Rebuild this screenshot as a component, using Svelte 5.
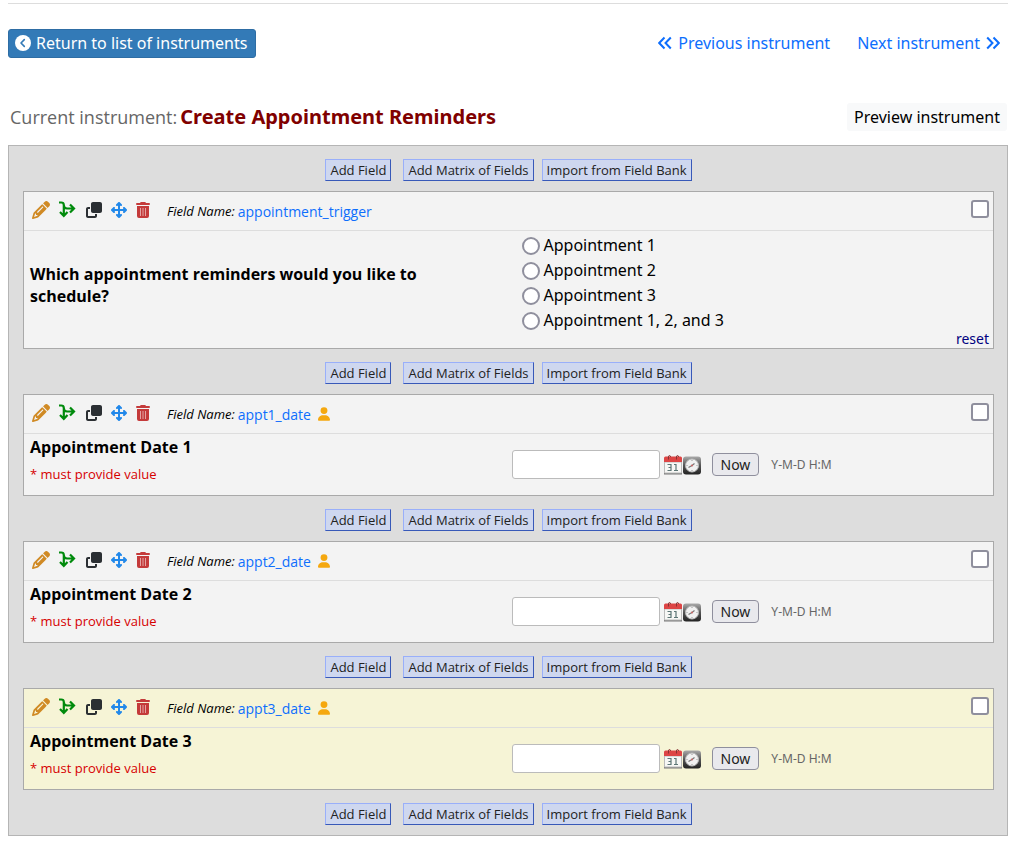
<script>
  const choices = ['Appointment 1', 'Appointment 2', 'Appointment 3', 'Appointment 1, 2, and 3'];
  const fields = [
    { name: 'appointment_trigger', label: 'Which appointment reminders would you like to schedule?', type: 'radio' },
    { name: 'appt1_date', label: 'Appointment Date 1', type: 'date' },
    { name: 'appt2_date', label: 'Appointment Date 2', type: 'date' },
    { name: 'appt3_date', label: 'Appointment Date 3', type: 'date', highlight: true }
  ];
</script>

{#snippet addButtons()}
  <div class="adders">
    <button type="button">Add Field</button>
    <button type="button" class="matrix">Add Matrix of Fields</button>
    <button type="button">Import from Field Bank</button>
  </div>
{/snippet}

{#snippet tools()}
  <div class="tools">
    <button type="button" aria-label="Edit">
      <svg width="18" height="18" viewBox="0 0 512 512" fill="#d08a24"><path d="M410.3 231l11.3-11.3-33.9-33.9-62.1-62.1L291.7 89.8l-11.3 11.3-22.6 22.6L58.6 322.9c-10.4 10.4-18 23.3-22.2 37.4L1 480.7c-2.5 8.4-.2 17.5 6.1 23.7s15.3 8.5 23.7 6.1l120.3-35.4c14.1-4.2 27-11.8 37.4-22.2L387.7 253.7 410.3 231zM160 399.4l-9.1 22.7c-4 3.1-8.5 5.4-13.3 6.9L59.4 452l23-78.1c1.4-4.9 3.8-9.4 6.9-13.3l22.7-9.1v32c0 8.8 7.2 16 16 16h32zM362.7 18.7L348.3 33.2 325.7 55.8 314.3 67.1l33.9 33.9 62.1 62.1 33.9 33.9 11.3-11.3 22.6-22.6 14.5-14.5c25-25 25-65.5 0-90.5L453.3 18.7c-25-25-65.5-25-90.5 0zm-47.4 168l-144 144c-6.2 6.2-16.4 6.2-22.6 0s-6.2-16.4 0-22.6l144-144c6.2-6.2 16.4-6.2 22.6 0s6.2 16.4 0 22.6z" /></svg>
    </button>
    <button type="button" aria-label="Branching logic">
      <svg width="18" height="18" viewBox="1 1 18 18" fill="none" stroke="#008a0c" stroke-width="2.200"><path d="M1 2.500h2.200Q5.800 2.500 5.800 5V15.500M2 12L5.800 16L9.500 12M5.800 5Q5.800 8.500 9 8.500H15.500M12 4.500L16 8.500L12 12.500" /></svg>
    </button>
    <button type="button" aria-label="Copy">
      <svg width="16" height="16" viewBox="0 0 512 512" fill="#2b2f33"><path d="M288 448L64 448l0-224 64 0 0-64-64 0c-35.3 0-64 28.7-64 64L0 448c0 35.3 28.700 64 64 64l224 0c35.300 0 64-28.700 64-64l0-64-64 0 0 64zm-64-96l224 0c35.300 0 64-28.700 64-64l0-224c0-35.300-28.700-64-64-64L224 0c-35.300 0-64 28.700-64 64l0 224c0 35.300 28.700 64 64 64z" /></svg>
    </button>
    <button type="button" aria-label="Move">
      <svg width="16" height="16" viewBox="0 0 512 512" fill="#2188ea"><path d="M278.6 9.4c-12.5-12.5-32.8-12.5-45.3 0l-64 64c-12.5 12.5-12.5 32.8 0 45.3s32.8 12.5 45.3 0l9.4-9.4V224H109.3l9.4-9.4c12.5-12.5 12.5-32.8 0-45.3s-32.8-12.5-45.3 0l-64 64c-12.5 12.5-12.5 32.8 0 45.3l64 64c12.5 12.5 32.8 12.5 45.3 0s12.5-32.8 0-45.3l-9.4-9.4H224V402.7l-9.4-9.4c-12.5-12.5-32.8-12.5-45.3 0s-12.5 32.8 0 45.3l64 64c12.5 12.5 32.8 12.5 45.3 0l64-64c12.5-12.5 12.5-32.8 0-45.3s-32.8-12.5-45.3 0l-9.4 9.4V288H402.7l-9.4 9.4c-12.5 12.5-12.5 32.8 0 45.3s32.8 12.5 45.3 0l64-64c12.5-12.5 12.5-32.8 0-45.3l-64-64c-12.5-12.5-32.8-12.5-45.3 0s-12.5 32.8 0 45.3l9.4 9.4H288V109.3l9.4 9.4c12.5 12.5 32.8 12.5 45.3 0s12.5-32.8 0-45.3l-64-64z" /></svg>
    </button>
    <button type="button" aria-label="Delete">
      <svg width="14" height="16" viewBox="0 0 14 16"><path fill="#c43a3a" d="M4.200.6Q4.500 0 5.200 0h3.600q.7 0 1 .6l.2.4h3q1 0 1 1t-1 1H1Q0 3 0 2t1-1h3zM1 4h12v10q0 2-2 2H3q-2 0-2-2z" /><path stroke="#e3a5a5" d="M4.500 6v8M7 6v8M9.500 6v8" /></svg>
    </button>
  </div>
{/snippet}

<main>
  <nav>
    <button type="button" class="return">
      <svg width="16" height="16" viewBox="0 0 16 16"><circle cx="8" cy="8" r="8" fill="#fff" /><path d="M9.300 4.600L6 8l3.300 3.400" fill="none" stroke="#337ab7" stroke-width="1.600" stroke-linecap="round" stroke-linejoin="round" /></svg>
      Return to list of instruments
    </button>
    <div class="links">
      <a href="#previous">
        <svg width="14" height="14" viewBox="0 0 14 14"><path d="M6.500 1.500L1.200 7l5.300 5.500M12.800 1.500L7.500 7l5.300 5.500" /></svg>
        Previous instrument
      </a>
      <a href="#next">
        Next instrument
        <svg width="14" height="14" viewBox="0 0 14 14"><path d="M1.200 1.500L6.500 7l-5.300 5.500M7.500 1.500L12.800 7l-5.300 5.500" /></svg>
      </a>
    </div>
  </nav>

  <header>
    <h1><span>Current instrument:</span> Create Appointment Reminders</h1>
    <button type="button" class="preview">Preview instrument</button>
  </header>

  <div class="panel">
    {@render addButtons()}
    {#each fields as field}
      <section class="card" class:highlight={field.highlight}>
        <div class="card-head">
          {@render tools()}
          <span class="field-name">Field Name:</span>
          <a href="#{field.name}">{field.name}</a>
          {#if field.type === 'date'}
            <svg class="user" width="12" height="14" viewBox="0 0 448 512" fill="#f5a80f"><path d="M224 256A128 128 0 1 0 224 0a128 128 0 1 0 0 256zm-45.700 48C79.800 304 0 383.800 0 482.300C0 498.700 13.300 512 29.700 512l388.600 0c16.400 0 29.700-13.300 29.700-29.700C448 383.800 368.200 304 269.700 304l-91.400 0z" /></svg>
          {/if}
          <input type="checkbox" aria-label="Select {field.name}" />
        </div>
        <div class="card-body">
          {#if field.type === 'radio'}
            <div class="label"><span id="q-{field.name}">{field.label}</span></div>
            <div class="choices" role="radiogroup" aria-labelledby="q-{field.name}">
              {#each choices as choice}
                <label><input type="radio" name={field.name} /> {choice}</label>
              {/each}
              <a class="reset" href="#reset">reset</a>
            </div>
          {:else}
            <div class="label">
              <label for={field.name}>{field.label}</label>
              <span class="required">* must provide value</span>
            </div>
            <div class="entry">
              <input type="text" id={field.name} />
              <svg class="pickers" width="38" height="20" viewBox="0 0 38 20">
                <defs>
                  <linearGradient id="g-{field.name}" x2="0" y2="1"><stop stop-color="#aaa" /><stop offset=".5" stop-color="#555" /><stop offset="1" stop-color="#222" /></linearGradient>
                </defs>
                <path d="M0 18h18v1.500H0z" fill="#777" />
                <path d="M.5 7h17v11H.5z" fill="#f7f7f5" stroke="#bbb" />
                <path d="M0 3q0-1.500 1.500-1.500h15Q18 1.500 18 3v4H0z" fill="#dd4545" />
                <path d="M4.500 4.500V2q0-1.500 1-1.500T6.500 2M12.500 4.500V2q0-1.500 1-1.500T14.500 2" fill="none" stroke="#833" />
                <path d="M3.500 9.500h3.500v6H3.500M4.500 12.500h2.500M10 9.500h2v6M10 15.500h4" fill="none" stroke="#5d7676" stroke-width="1.200" />
                <rect x="19" y="1.500" width="18" height="18" rx="3" fill="url(#g-{field.name})" />
                <circle cx="28" cy="10.500" r="6.500" fill="#f1f1f1" stroke="#bbb" />
                <path d="M28 5v1M28 15v1M22.500 10.500h1M32.500 10.500h1" stroke="#999" />
                <path d="M24.500 12.500L28 10.500l2.500-2" fill="none" stroke="#777" stroke-width="1.200" />
                <circle cx="28" cy="10.500" r="1" fill="#c66" />
              </svg>
              <button type="button">Now</button>
              <span class="format">Y-M-D H:M</span>
            </div>
          {/if}
        </div>
      </section>
      {@render addButtons()}
    {/each}
  </div>
</main>

<style>
  :global(body) {
    margin: 0;
    background: #fff;
  }
  main {
    margin: 3px 9px 11px 8px;
    border-top: 1px solid #ddd;
    font-family: 'Noto Sans', 'Open Sans', sans-serif;
    font-size: 16px;
    color: #000;
  }
  button,
  input {
    font-family: inherit;
    box-sizing: border-box;
    margin: 0;
  }
  svg {
    display: block;
    flex: none;
  }
  a {
    color: #0d6efd;
    text-decoration: none;
  }
  nav,
  header,
  .links,
  .links a {
    display: flex;
    align-items: center;
  }
  nav {
    justify-content: space-between;
    padding: 25px 8px 0 0;
  }
  .return {
    display: flex;
    align-items: center;
    gap: 5px;
    height: 29px;
    padding: 0 8px 2px 6px;
    border: 1px solid #2e6da4;
    border-radius: 3px;
    background: #337ab7;
    color: #fff;
    font-size: 16px;
  }
  .links {
    gap: 27px;
    padding-bottom: 2px;
  }
  .links a {
    gap: 6px;
  }
  .links svg {
    fill: none;
    stroke: #0d6efd;
    stroke-width: 2;
  }
  header {
    justify-content: space-between;
    padding: 45px 1px 14px 2px;
  }
  h1 {
    display: flex;
    align-items: baseline;
    gap: 3px;
    margin: 0;
    color: #800000;
    font-size: 20px;
    line-height: 28px;
  }
  h1 span {
    color: #666;
    font-family: 'Open Sans', 'Noto Sans', sans-serif;
    font-size: 18px;
    font-weight: 400;
  }
  .preview {
    height: 28px;
    padding: 0 7px;
    border: 0;
    border-radius: 3px;
    background: #f8f9fa;
    font-size: 16px;
  }
  .panel {
    border: 1px solid #b5b5b5;
    background: #ddd;
    padding: 0 13px 0 14px;
  }
  .adders {
    display: flex;
    justify-content: center;
    gap: 8px;
    padding: 13px 0 10px;
  }
  .adders button {
    height: 22px;
    padding: 0 4px 1px;
    border: 1px solid;
    border-color: #99affa #3859b8 #3859b8 #99affa;
    background: #ced7ef;
    color: #222;
    font-family: 'Open Sans', 'Noto Sans', sans-serif;
    font-size: 13px;
    line-height: 18px;
  }
  .adders .matrix {
    margin-left: 4px;
  }
  .card {
    border: 1px solid #a9a9a9;
    background: #f3f3f3;
  }
  .highlight {
    background: #f6f4d6;
  }
  .card-head {
    display: flex;
    align-items: center;
    gap: 3px;
    height: 38px;
    padding: 0 4px 0 8px;
    border-bottom: 1px solid #ddd;
    font-family: 'Open Sans', 'Noto Sans', sans-serif;
    font-size: 14px;
  }
  .tools {
    display: flex;
    align-items: center;
    gap: 9px;
    margin-right: 14px;
    padding-bottom: 3px;
  }
  .tools button {
    padding: 0;
    border: 0;
    background: none;
  }
  .field-name {
    font-size: 13px;
    font-style: italic;
  }
  .user {
    margin-left: 4px;
  }
  input[type='checkbox'],
  input[type='radio'] {
    appearance: none;
    flex: none;
    width: 18px;
    height: 18px;
    border: 2px solid #8f8f9d;
    border-radius: 3px;
    background: #fff;
  }
  input[type='checkbox'] {
    margin: 0 0 4px auto;
  }
  input[type='radio'] {
    border-radius: 50%;
  }
  .card-body {
    display: grid;
    grid-template-columns: 1fr 1fr;
    align-items: center;
    min-height: 61px;
  }
  .label {
    display: flex;
    flex-direction: column;
    gap: 6px;
    padding: 0 60px 10px 6px;
    font-family: 'Open Sans', 'Noto Sans', sans-serif;
    font-weight: 700;
    line-height: 22px;
  }
  .required {
    color: #d60000;
    font-size: 13px;
    font-weight: 400;
    line-height: 20px;
  }
  .choices {
    display: flex;
    flex-direction: column;
    padding: 2px 4px 3px 13px;
  }
  .choices label {
    display: flex;
    align-items: center;
    gap: 4px;
    line-height: 25px;
  }
  .reset {
    align-self: flex-end;
    color: #000080;
    font-size: 14px;
    line-height: 12px;
  }
  .entry {
    display: flex;
    align-items: center;
    padding-left: 3px;
  }
  .entry input {
    width: 148px;
    height: 29px;
    border: 1px solid #bbb;
    border-radius: 3px;
    background: #fff;
  }
  .pickers {
    margin: 0 10px 0 4px;
  }
  .entry button {
    height: 23px;
    padding: 0 8px;
    border: 1px solid #8f8f9d;
    border-radius: 4px;
    background: #e9e9ed;
    color: #222;
    font-size: 14px;
    line-height: 18px;
  }
  .format {
    margin-left: 12px;
    color: #666;
    font-size: 12px;
  }
</style>
